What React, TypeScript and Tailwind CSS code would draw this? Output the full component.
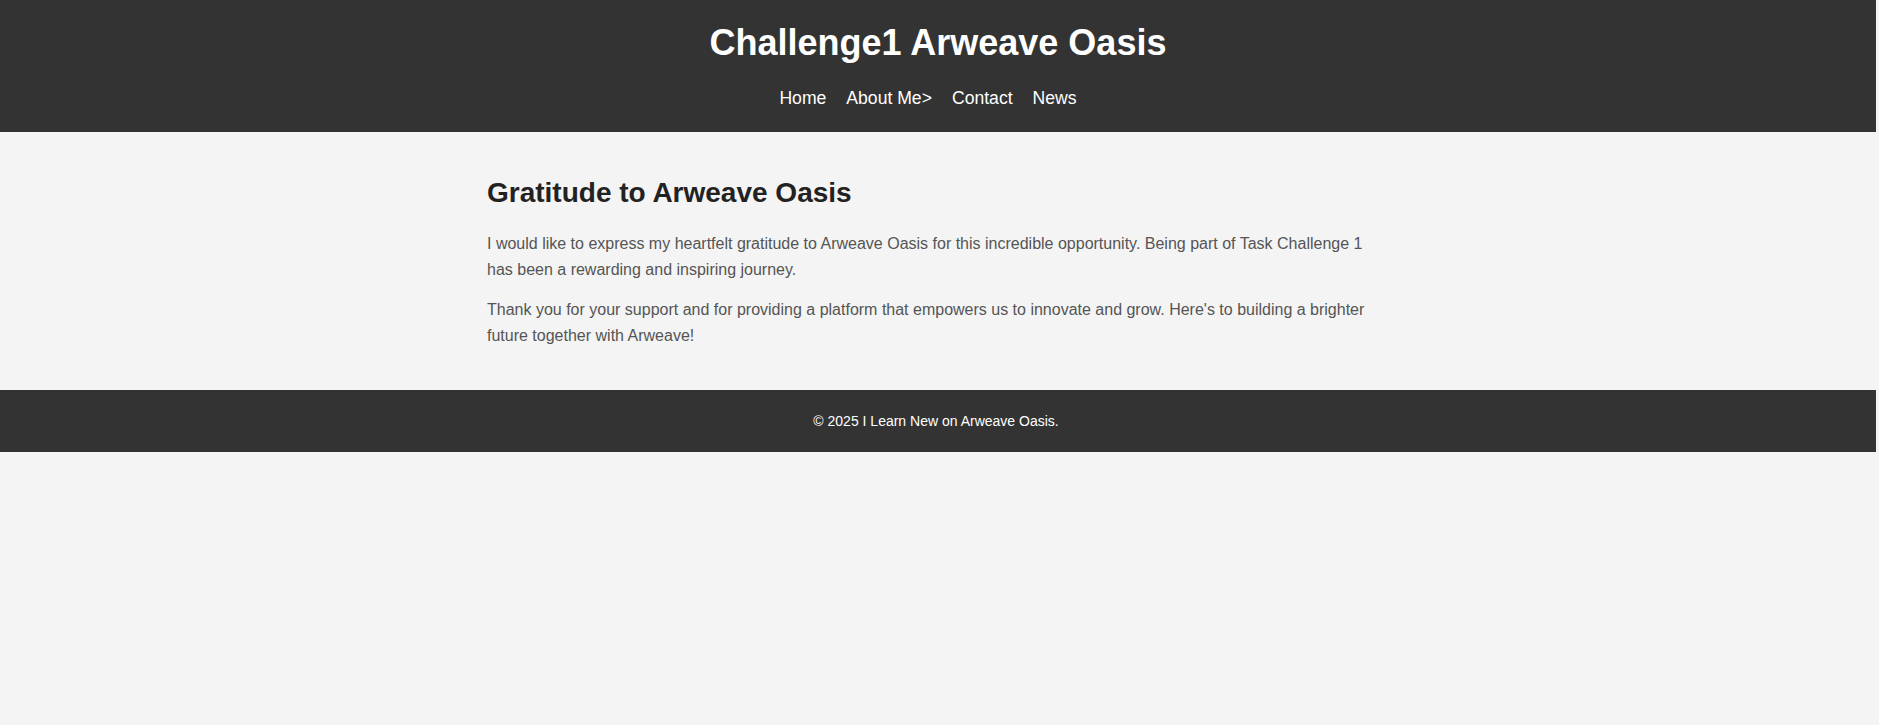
export default function App() {
  const links = ["Home", "About Me>", "Contact", "News"];

  return (
    <div className="min-h-screen bg-[#f4f4f4] font-['Liberation_Sans',Arial,sans-serif]">
      <header className="w-[calc(100%-3px)] bg-[#333333] pt-5 pb-6 text-center text-white">
        <h1 className="text-[36px] font-bold leading-[46px]">Challenge1 Arweave Oasis</h1>
        <nav className="mt-[22px] flex justify-center text-[17.6px] leading-5">
          {links.map((l) => (
            <a key={l} href="#" className="mr-5 text-white">
              {l}
            </a>
          ))}
        </nav>
      </header>

      <main className="w-[calc(100%-3px)]">
        <div className="mx-auto max-w-[902px] pt-[45px] pb-[41px]">
          <h2 className="text-[28px] font-bold leading-8 text-[#222222]">Gratitude to Arweave Oasis</h2>
          <p className="mt-[22px] text-base leading-[26px] text-[#555555]">
            I would like to express my heartfelt gratitude to Arweave Oasis for this incredible opportunity. Being part
            of Task Challenge 1 has been a rewarding and inspiring journey.
          </p>
          <p className="mt-[14px] text-base leading-[26px] text-[#555555]">
            Thank you for your support and for providing a platform that empowers us to innovate and grow. Here's to
            building a brighter future together with Arweave!
          </p>
        </div>
      </main>

      <footer className="flex h-[62px] w-[calc(100%-3px)] items-center justify-center bg-[#333333] pr-1 text-sm text-white">
        © 2025 I Learn New on Arweave Oasis.
      </footer>
    </div>
  );
}
